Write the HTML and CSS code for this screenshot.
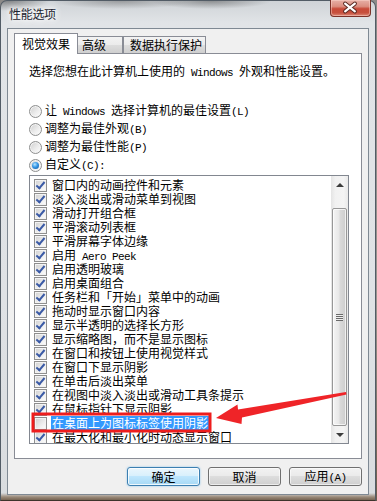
FILE: index.html
```html
<!DOCTYPE html>
<html lang="zh-CN">
<head>
<meta charset="utf-8">
<title>性能选项</title>
<link rel="stylesheet" href="styles.css">
</head>
<body>
<div class="window">
  <div class="titlebar">
    <span class="title">性能选项</span>
    <div class="close">
      <svg width="41" height="17" viewBox="0 0 41 17">
        <path d="M15.5 4.5 L25.5 12.5 M25.5 4.5 L15.5 12.5" stroke="#5b2a22" stroke-width="4.2" stroke-linecap="round" fill="none"/>
        <path d="M15.5 4.5 L25.5 12.5 M25.5 4.5 L15.5 12.5" stroke="#ffffff" stroke-width="2.2" stroke-linecap="round" fill="none"/>
      </svg>
    </div>
  </div>
  <div class="client">
    <div class="tabs">
      <div class="tab active">视觉效果</div>
      <div class="tab t2">高级</div>
      <div class="tab t3">数据执行保护</div>
    </div>
    <div class="panel">
      <p class="desc">选择您想在此计算机上使用的<span class="lat"> Windows </span>外观和性能设置。</p>
      <div class="radios">
        <div class="rrow"><span class="radio"></span><span>让<span class="lat"> Windows </span>选择计算机的最佳设置<span class="lat">(L)</span></span></div>
        <div class="rrow"><span class="radio"></span><span>调整为最佳外观<span class="lat">(B)</span></span></div>
        <div class="rrow"><span class="radio"></span><span>调整为最佳性能<span class="lat">(P)</span></span></div>
        <div class="rrow"><span class="radio sel"><span class="dot"></span></span><span>自定义<span class="lat">(C):</span></span></div>
      </div>
      <div class="listbox">
        <div class="items">
          <div class="item"><span class="cb on"></span><span class="lbl">窗口内的动画控件和元素</span></div>
          <div class="item"><span class="cb on"></span><span class="lbl">淡入淡出或滑动菜单到视图</span></div>
          <div class="item"><span class="cb on"></span><span class="lbl">滑动打开组合框</span></div>
          <div class="item"><span class="cb on"></span><span class="lbl">平滑滚动列表框</span></div>
          <div class="item"><span class="cb on"></span><span class="lbl">平滑屏幕字体边缘</span></div>
          <div class="item"><span class="cb on"></span><span class="lbl">启用<span class="lat"> Aero Peek</span></span></div>
          <div class="item"><span class="cb on"></span><span class="lbl">启用透明玻璃</span></div>
          <div class="item"><span class="cb on"></span><span class="lbl">启用桌面组合</span></div>
          <div class="item"><span class="cb on"></span><span class="lbl">任务栏和「开始」菜单中的动画</span></div>
          <div class="item"><span class="cb on"></span><span class="lbl">拖动时显示窗口内容</span></div>
          <div class="item"><span class="cb on"></span><span class="lbl">显示半透明的选择长方形</span></div>
          <div class="item"><span class="cb on"></span><span class="lbl">显示缩略图，而不是显示图标</span></div>
          <div class="item"><span class="cb on"></span><span class="lbl">在窗口和按钮上使用视觉样式</span></div>
          <div class="item"><span class="cb on"></span><span class="lbl">在窗口下显示阴影</span></div>
          <div class="item"><span class="cb on"></span><span class="lbl">在单击后淡出菜单</span></div>
          <div class="item"><span class="cb on"></span><span class="lbl">在视图中淡入淡出或滑动工具条提示</span></div>
          <div class="item"><span class="cb on"></span><span class="lbl">在鼠标指针下显示阴影</span></div>
          <div class="item"><span class="cb"></span><span class="lbl hl">在桌面上为图标标签使用阴影</span></div>
          <div class="item"><span class="cb on"></span><span class="lbl">在最大化和最小化时动态显示窗口</span></div>
        </div>
        <div class="sbar">
          <div class="sbtn"><span class="up"></span></div>
          <div class="track-top"></div>
          <div class="thumb"><span class="grip"></span></div>
          <div class="track-bot"></div>
          <div class="sbtn"><span class="down"></span></div>
        </div>
      </div>
    </div>
    <div class="buttons">
      <button class="btn default">确定</button>
      <button class="btn">取消</button>
      <button class="btn">应用<span class="lat">(A)</span></button>
    </div>
  </div>
  <svg class="annot" width="377" height="501" viewBox="0 0 377 501">
    <rect x="33" y="414" width="177" height="17" fill="none" stroke="#ee1d1d" stroke-width="3"/>
    <polygon points="216,418 237.5,404.5 238,409.5 346,392 346.5,394.5 242,417.5 241.5,424" fill="#ef2428"/>
  </svg>
</div>
</body>
</html>
```

FILE: styles.css
```css
html, body {
  margin: 0;
  padding: 0;
}

body {
  width: 377px;
  height: 501px;
  overflow: hidden;
  background: linear-gradient(180deg, #8c8a88 0%, #9b958f 60%, #6d5c4b 100%);
  font-family: "Noto Sans CJK SC", "Noto Sans", sans-serif;
  font-size: 12px;
  color: #000;
}

.lat {
  font-family: "Liberation Mono", "DejaVu Sans Mono", monospace;
  font-size: 11px;
  letter-spacing: -0.6px;
  white-space: pre;
}

.window {
  position: relative;
  width: 376px;
  height: 501px;
  box-sizing: border-box;
  border: 1px solid #525c66;
  border-bottom: 1px solid #3e342b;
  border-radius: 7px 7px 0 0;
  padding: 0 6px;
  display: flex;
  flex-direction: column;
  background:
    radial-gradient(ellipse 40px 10px at 8px 0px, rgba(70,70,70,0.55), rgba(70,70,70,0)),
    radial-gradient(ellipse 70px 8px at 120px 0px, rgba(90,90,90,0.45), rgba(90,90,90,0)),
    radial-gradient(ellipse 60px 8px at 210px 0px, rgba(60,60,60,0.45), rgba(60,60,60,0)),
    linear-gradient(180deg, #cfd3d7 0px, #e1e4e7 22px, #dfe2e5 300px, #d9dcdf 492px, #9a8978 496px, #6a5847 500px);
}

.titlebar {
  height: 27px;
  margin: 0 -6px;
  display: flex;
  justify-content: space-between;
  align-items: flex-start;
}

.title {
  margin-top: 6px;
  padding-left: 8px;
  line-height: 14px;
  color: #1c2430;
  letter-spacing: -0.3px;
  text-shadow: 0 0 4px #fff, 0 0 8px #fff, 0 0 10px rgba(255,255,255,0.9);
}

.close {
  margin-top: -1px;
  margin-right: 4px;
  width: 41px;
  height: 17px;
  box-sizing: border-box;
  border: 1px solid #7b3128;
  border-top: none;
  border-radius: 0 0 4px 4px;
  background: linear-gradient(180deg, #e7b0a6 0%, #db8e80 40%, #c84a38 55%, #c7503d 80%, #dc8a78 100%);
  box-shadow: inset 0 0 0 1px rgba(255,220,210,0.45);
  display: flex;
}

.close svg {
  margin: -1px 0 0 -1px;
}

.client {
  height: 467px;
  box-sizing: border-box;
  border: 1px solid #7f8993;
  background: #f0f0f0;
  padding: 4px 6px 0;
  display: flex;
  flex-direction: column;
}

.tabs {
  display: flex;
  align-items: flex-end;
  height: 21px;
  margin-bottom: -1px;
  position: relative;
  z-index: 1;
}

.tab {
  box-sizing: border-box;
  height: 17px;
  margin-bottom: 1px;
  border: 1px solid #898c95;
  border-bottom: none;
  line-height: 16px;
  white-space: nowrap;
  background: linear-gradient(180deg, #f3f3f3 0%, #ebebeb 50%, #dddddd 51%, #cfcfcf 100%);
}

.tab.active {
  width: 64px;
  height: 21px;
  margin-bottom: 0;
  background: #fff;
  text-align: center;
  line-height: 19px;
}

.tab.t2 {
  width: 45px;
  border-left: none;
  padding-left: 4px;
}

.tab.t3 {
  width: 83px;
  padding-left: 6px;
}

.panel {
  height: 406px;
  box-sizing: border-box;
  border: 1px solid #898c95;
  background: #fff;
  padding: 10px 12px 0 14px;
}

.desc {
  margin: 0;
  line-height: 14px;
  height: 14px;
  white-space: nowrap;
}

.radios {
  margin-top: 24px;
}

.rrow {
  height: 18px;
  display: flex;
  align-items: center;
  gap: 3px;
  white-space: nowrap;
  line-height: 14px;
}

.radio {
  flex: none;
  width: 13px;
  height: 13px;
  box-sizing: border-box;
  border-radius: 50%;
  border: 1px solid #8e8f8f;
  background: linear-gradient(135deg, #cdcdcd 0%, #ececec 55%, #ffffff 100%);
  box-shadow: inset 0 0 0 1px #f4f4f4;
  display: flex;
  align-items: center;
  justify-content: center;
}

.dot {
  width: 7px;
  height: 7px;
  border-radius: 50%;
  background: radial-gradient(circle at 40% 35%, #b7e6ff 0%, #3596e6 45%, #0b4f93 100%);
}

.listbox {
  margin-top: 1px;
  height: 269px;
  box-sizing: border-box;
  border: 1px solid #828790;
  display: flex;
  background: #fff;
}

.items {
  flex: 1;
  overflow: hidden;
  padding-top: 2px;
}

.item {
  height: 14px;
  display: flex;
  align-items: center;
  padding-left: 4px;
  white-space: nowrap;
}

.cb {
  flex: none;
  width: 13px;
  height: 13px;
  box-sizing: border-box;
  margin-right: 4px;
  border: 1px solid #8f8f8f;
  background: linear-gradient(135deg, #d0d0d0 0%, #eeeeee 60%, #ffffff 100%);
  box-shadow: inset 0 0 0 1px #f3f3f3;
  display: flex;
  align-items: center;
  justify-content: center;
}

.cb.on::after {
  content: "";
  width: 3px;
  height: 7px;
  border: solid #3a5aa6;
  border-width: 0 2px 2px 0;
  transform: translateY(-1px) rotate(40deg);
}

.lbl {
  padding: 0 1px;
  height: 14px;
  line-height: 14px;
}

.lbl.hl {
  background: #3399ff;
  color: #fff;
}

.sbar {
  width: 17px;
  flex: none;
  display: flex;
  flex-direction: column;
  background: linear-gradient(90deg, #e4e4e4 0%, #f1f1f1 25%, #f4f4f4 75%, #e9e9e9 100%);
}

.sbtn {
  height: 17px;
  display: flex;
  align-items: center;
  justify-content: center;
}

.up {
  width: 0;
  height: 0;
  border-left: 4px solid transparent;
  border-right: 4px solid transparent;
  border-bottom: 4px solid #3c3c3c;
}

.down {
  width: 0;
  height: 0;
  border-left: 4px solid transparent;
  border-right: 4px solid transparent;
  border-top: 4px solid #3c3c3c;
}

.track-top {
  height: 15px;
}

.track-bot {
  flex: 1;
}

.thumb {
  height: 218px;
  margin: 0 1px;
  box-sizing: border-box;
  border: 1px solid #979797;
  border-radius: 2px;
  background: linear-gradient(90deg, #f4f4f4 0%, #e8e8e8 45%, #d9d9d9 55%, #cdcdcd 100%);
  box-shadow: inset 0 0 0 1px rgba(255,255,255,0.7);
  display: flex;
  align-items: center;
  justify-content: center;
}

.grip {
  width: 7px;
  height: 7px;
  background: repeating-linear-gradient(180deg, #6a6a6a 0px, #6a6a6a 1px, #eeeeee 1px, #eeeeee 2px);
}

.buttons {
  margin-top: 8px;
  display: flex;
  justify-content: flex-end;
  gap: 8px;
}

.btn {
  width: 73px;
  height: 19px;
  box-sizing: border-box;
  padding: 0;
  border: 1px solid #707070;
  border-radius: 3px;
  font-family: "Noto Sans CJK SC", "Noto Sans", sans-serif;
  font-size: 12px;
  line-height: 16px;
  color: #000;
  background: linear-gradient(180deg, #f2f2f2 0%, #ebebeb 45%, #dddddd 50%, #cfcfcf 100%);
  box-shadow: inset 0 0 0 1px rgba(255,255,255,0.6);
}

.btn.default {
  border-color: #3c7fb1;
  background: linear-gradient(180deg, #eaf6fd 0%, #d9f0fc 45%, #bee6fd 50%, #a7d9f5 100%);
  box-shadow: inset 0 0 0 1px rgba(255,255,255,0.8), 0 0 2px rgba(60,160,230,0.6);
}

.annot {
  position: absolute;
  left: -1px;
  top: -1px;
  pointer-events: none;
}
```
